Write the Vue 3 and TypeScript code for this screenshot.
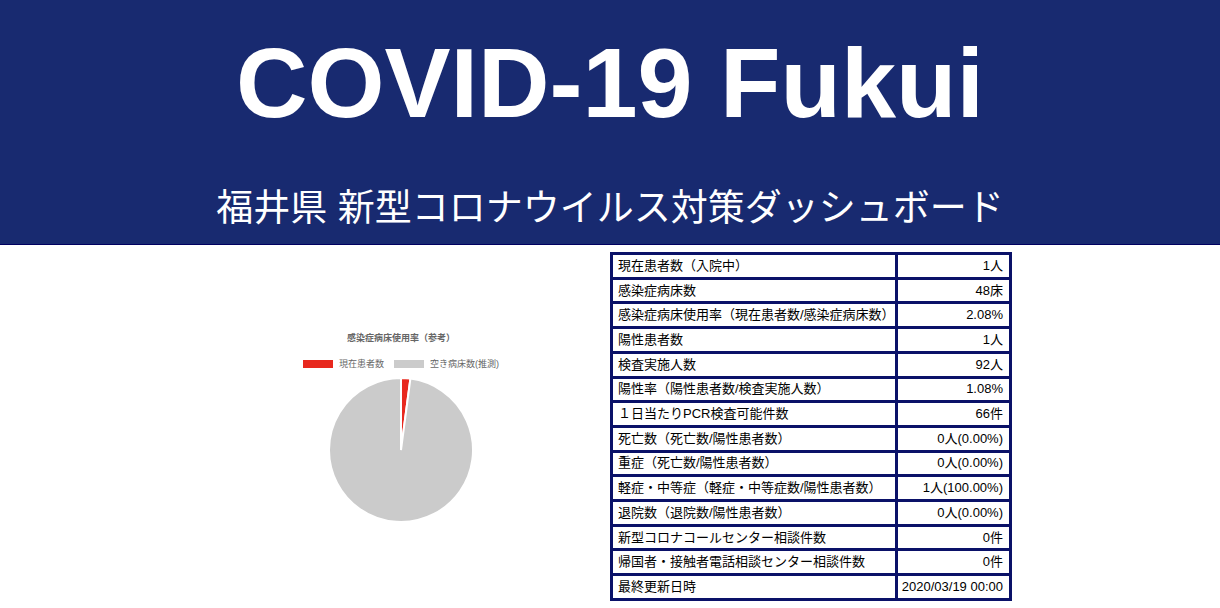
<script setup lang="ts">
interface Stat {
  label: string
  value: string
}

interface Segment {
  label: string
  count: number
  tone: string
}

const stats: Stat[] = [
  { label: '現在患者数（入院中）', value: '1人' },
  { label: '感染症病床数', value: '48床' },
  { label: '感染症病床使用率（現在患者数/感染症病床数）', value: '2.08%' },
  { label: '陽性患者数', value: '1人' },
  { label: '検査実施人数', value: '92人' },
  { label: '陽性率（陽性患者数/検査実施人数）', value: '1.08%' },
  { label: '１日当たりPCR検査可能件数', value: '66件' },
  { label: '死亡数（死亡数/陽性患者数）', value: '0人(0.00%)' },
  { label: '重症（死亡数/陽性患者数）', value: '0人(0.00%)' },
  { label: '軽症・中等症（軽症・中等症数/陽性患者数）', value: '1人(100.00%)' },
  { label: '退院数（退院数/陽性患者数）', value: '0人(0.00%)' },
  { label: '新型コロナコールセンター相談件数', value: '0件' },
  { label: '帰国者・接触者電話相談センター相談件数', value: '0件' },
  { label: '最終更新日時', value: '2020/03/19 00:00' },
]

const segments: Segment[] = [
  { label: '現在患者数', count: 1, tone: 'used' },
  { label: '空き病床数(推測)', count: 47, tone: 'free' },
]

const radius = 72
const total = segments.reduce((sum, s) => sum + s.count, 0)

function point(share: number): string {
  const angle = share * 2 * Math.PI
  return `${(radius * Math.sin(angle)).toFixed(3)} ${(-radius * Math.cos(angle)).toFixed(3)}`
}

// Slices run clockwise from twelve o'clock.
let passed = 0
const slices = segments.map((s) => {
  const from = passed / total
  passed += s.count
  const to = passed / total
  const large = to - from > 0.5 ? 1 : 0
  return {
    tone: s.tone,
    d: `M0 0 L${point(from)} A${radius} ${radius} 0 ${large} 1 ${point(to)} Z`,
  }
})
</script>

<template>
  <div class="page">
    <header class="banner">
      <h1 class="title">COVID-19 Fukui</h1>
      <p class="subtitle">福井県 新型コロナウイルス対策ダッシュボード</p>
    </header>
    <main class="board">
      <figure class="chart">
        <figcaption class="chart-title">感染症病床使用率（参考）</figcaption>
        <ul class="legend">
          <li v-for="s in segments" :key="s.label" class="legend-item">
            <span class="swatch" :class="s.tone"></span>{{ s.label }}
          </li>
        </ul>
        <svg class="pie" viewBox="-73 -73 146 146" role="img" aria-label="感染症病床使用率">
          <path v-for="s in slices" :key="s.tone" :class="s.tone" :d="s.d" />
        </svg>
      </figure>
      <table class="stats">
        <tbody>
          <tr v-for="s in stats" :key="s.label">
            <th scope="row">{{ s.label }}</th>
            <td>{{ s.value }}</td>
          </tr>
        </tbody>
      </table>
    </main>
  </div>
</template>

<style>
body {
  margin: 0;
  background: #fff;
}
</style>

<style scoped>
.page {
  font-family: "Liberation Sans", "Noto Sans CJK JP", sans-serif;
  color: #000;
}

.banner {
  padding: 23px 16px 10px;
  border-bottom: 1px solid #000060;
  background: #182a70;
  color: #fff;
  text-align: center;
}

.title {
  margin: 0;
  font-size: 99px;
  line-height: 120px;
  font-weight: 700;
}

.subtitle {
  margin: 41px 0 0;
  font-size: 37px;
  line-height: 50px;
}

.board {
  display: grid;
  grid-template-columns: 1fr 1fr;
  align-items: center;
  padding: 7px 0 8px;
}

.chart {
  display: flex;
  flex-direction: column;
  align-items: center;
  justify-self: end;
  box-sizing: border-box;
  width: 100%;
  max-width: 402px;
  margin: 0 8px 0 0;
  color: #666;
  font-size: 9px;
  line-height: 14px;
}

.chart-title {
  font-weight: 700;
}

.legend {
  display: flex;
  gap: 10px;
  margin: 12px 0 6px;
  padding: 0;
  list-style: none;
}

.legend-item {
  display: flex;
  align-items: center;
  gap: 6px;
  white-space: nowrap;
}

.swatch {
  width: 30px;
  height: 8px;
}

.swatch.used {
  background: #e8281e;
}

.swatch.free {
  background: #cbcbcb;
}

.pie {
  width: 146px;
  height: 146px;
}

.pie path {
  stroke: #fff;
  stroke-width: 2;
  stroke-linejoin: bevel;
}

.pie .used {
  fill: #e8281e;
}

.pie .free {
  fill: #cbcbcb;
}

.stats {
  width: 402px;
  max-width: 100%;
  height: 349px;
  border-collapse: collapse;
  font-size: 13px;
  line-height: 18px;
}

.stats th,
.stats td {
  border: 3px solid #0a1168;
  font-weight: 400;
  white-space: nowrap;
}

.stats th {
  padding: 0 0 0 5px;
  text-align: left;
}

.stats td {
  padding: 0 6px 0 4px;
  text-align: right;
}

@media (max-width: 820px) {
  .board {
    grid-template-columns: 1fr;
    justify-items: center;
    gap: 16px;
  }

  .chart {
    justify-self: center;
    margin: 0;
  }
}
</style>
